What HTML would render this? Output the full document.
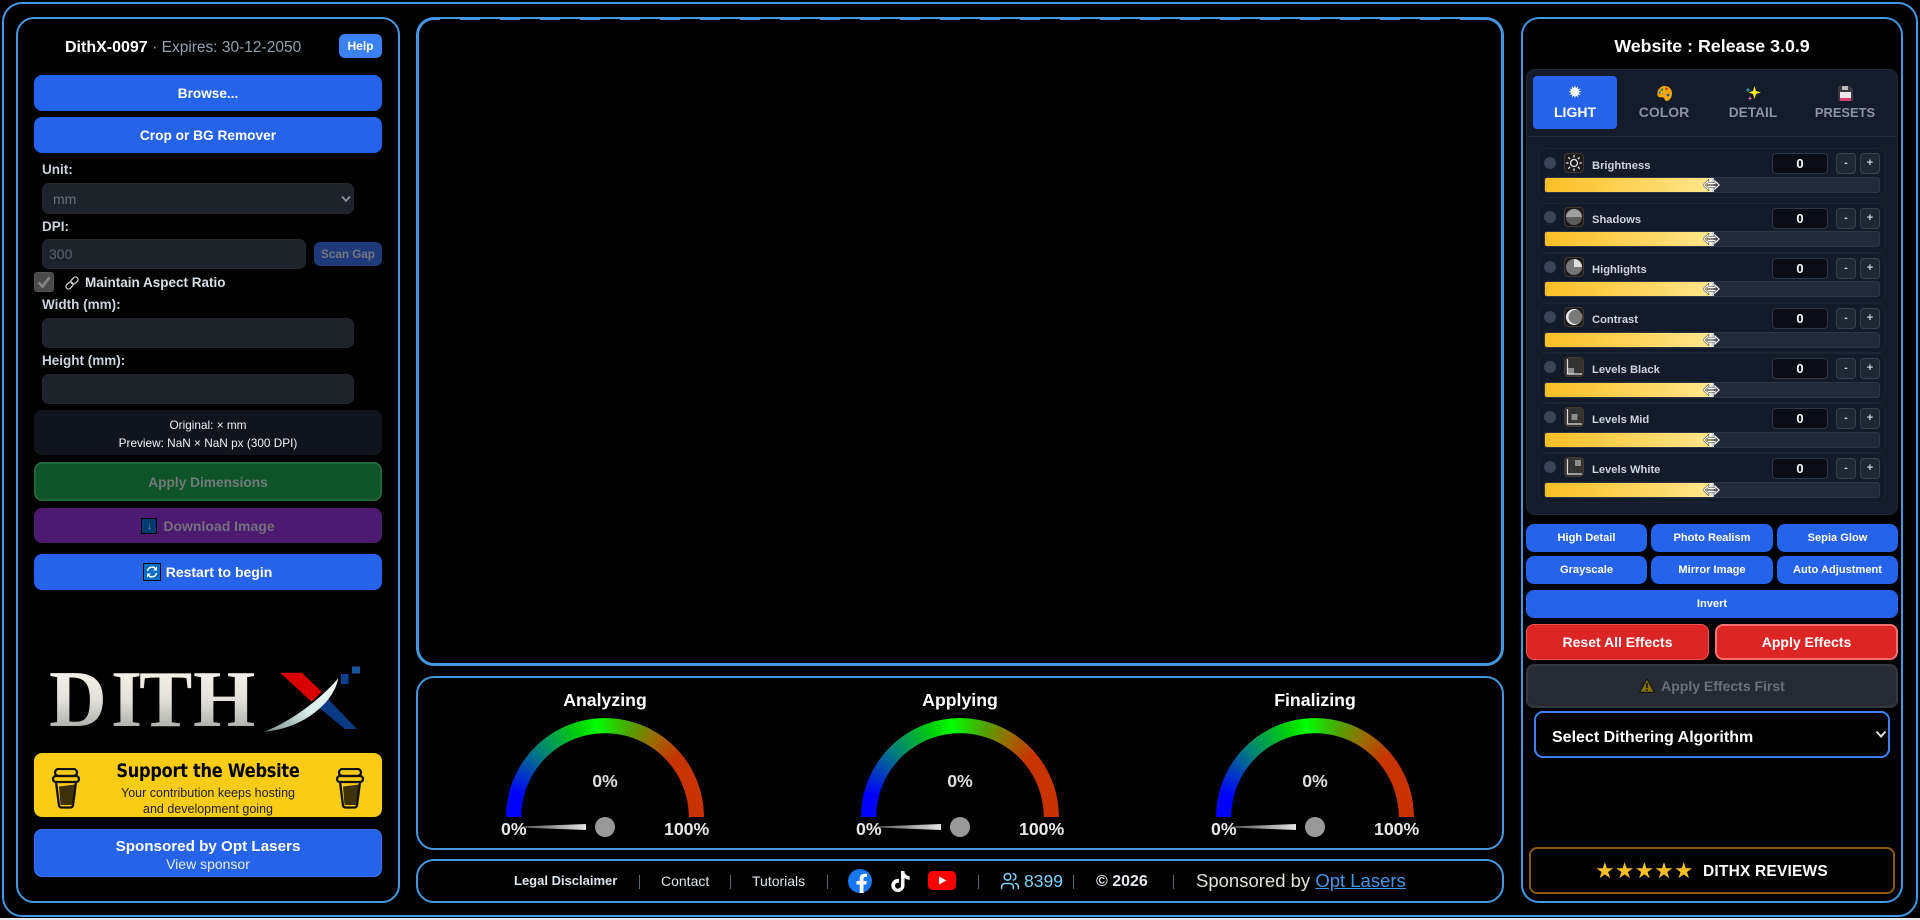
<!DOCTYPE html>
<html lang="en"><head><meta charset="utf-8"><title>DithX</title>
<style>
*{box-sizing:border-box;margin:0;padding:0}
html,body{width:1920px;height:920px;overflow:hidden;background:#000;font-family:"Liberation Sans",Arial,sans-serif;color:#fff}
.a{position:absolute}
.panel{position:absolute;border:2px solid #4299e1;border-radius:18px;background:#000}
button,.btn{position:absolute;display:flex;align-items:center;justify-content:center;border:0;border-radius:8px;background:#2563eb;color:#fff;font:bold 14px "Liberation Sans",Arial,sans-serif;white-space:nowrap}
.t{position:absolute;white-space:nowrap}
.c{transform:translateX(-50%)}
.lbl{position:absolute;left:42px;font-size:13.5px;font-weight:bold;color:#cbd2dc;white-space:nowrap;line-height:16px}
.inp{position:absolute;left:42px;width:312px;background:#1e2229;border:1px solid #23272e;border-radius:7px;color:#6b7078;font:14px "Liberation Sans",Arial,sans-serif}
.row{position:absolute;left:1539px;width:346px;height:50px;border:1px solid #1c2433;border-radius:7px;background:#131a29}
.dot{position:absolute;left:4px;top:8px;width:12px;height:12px;border-radius:50%;background:#3c4356}
.ic{position:absolute;left:24px;top:4px;width:20px;height:20px;border:1px solid #43382a;border-radius:4px;background:#1c1c1e;overflow:hidden}
.ic svg{display:block}
.nm{position:absolute;left:52px;top:9px;font-size:11.2px;font-weight:bold;color:#cdd5e0;line-height:16px;white-space:nowrap}
.val{position:absolute;left:232px;top:4px;width:56px;height:21px;background:#090c15;border:1px solid #2e3746;border-radius:4px;text-align:center;font:bold 13px/19px "Liberation Sans",Arial,sans-serif;color:#fff}
.pm{position:absolute;top:4px;width:20px;height:21px;background:#1f2735;border:1px solid #374151;border-radius:4px;font:bold 11px/19px "Liberation Sans",Arial,sans-serif;color:#c9d0da;text-align:center}
.sl{position:absolute;left:4px;top:28px;width:336px;height:16px;background:#222a39;border:1px solid #2d3646;border-radius:3px;overflow:hidden}
.sl i{position:absolute;left:0;top:0;height:100%;width:165px;background:linear-gradient(90deg,#fbbf24,#fde68a)}
.sl b{position:absolute;left:165px;top:0;width:4px;height:100%;background:linear-gradient(90deg,#fff,#b9bec8)}
.cur{position:absolute;left:163px;top:30px}
.r2 .dot{top:7px}.r2 .ic{top:3px}.r2 .nm{top:8px}.r2 .sl{top:27.5px}.r2 .cur{top:29.5px}
.tab{position:absolute;top:105px;font-size:14px;font-weight:bold;color:#8a93a3;transform:translateX(-50%);line-height:16px;white-space:nowrap}
.gl{position:absolute;width:198px;height:99px;top:718px;overflow:hidden}
.gl div{width:198px;height:198px;border-radius:50%;background:conic-gradient(from 270deg,#0000ff 0deg,#0000ff 14deg,#00807a 45deg,#00d800 75deg,#00ff00 85deg,#4fa400 105deg,#9a6a00 122deg,#c83400 140deg,#c83200 180deg,#0000ff 180deg);-webkit-mask:radial-gradient(circle,transparent 83.5px,#000 84px);mask:radial-gradient(circle,transparent 83.5px,#000 84px)}
.gt{position:absolute;font-size:17.7px;font-weight:bold;white-space:nowrap;line-height:20px}
.needle{position:absolute;top:824px;width:63px;height:6px;background:linear-gradient(90deg,#555,#e4e4e4);clip-path:polygon(0 40%,100% 0,100% 100%,0 60%)}
.hub{position:absolute;top:817px;width:20px;height:20px;border-radius:50%;background:#999}
.div{position:absolute;top:875px;width:1px;height:14px;background:#5d6673}
.ft{position:absolute;top:873px;font-size:14px;line-height:16px;color:#dfe5ec;white-space:nowrap}
</style></head><body>
<div class="panel" style="left:2px;top:2px;width:1916px;height:915px;border-radius:20px"></div>
<div class="a" style="left:0;top:918px;width:1920px;height:2px;background:#e8e8e8"></div>

<!-- LEFT -->
<div class="panel" style="left:16px;top:17px;width:384px;height:886px"></div>
<div class="t" style="left:65px;top:39px;font-size:16px;line-height:18px;font-weight:bold">DithX-0097 <span style="font-weight:normal;font-size:15.5px;color:#93a0b0">· Expires: 30-12-2050</span></div>
<button style="left:339px;top:34px;width:43px;height:24px;background:#3b82f6;border-radius:6px;font-size:12px">Help</button>
<button style="left:34px;top:74.5px;width:348px;height:36px;font-size:13.6px;padding-top:1px">Browse...</button>
<button style="left:34px;top:116.5px;width:348px;height:36px;font-size:13.7px;padding-top:1px">Crop or BG Remover</button>
<div class="lbl" style="top:162px">Unit:</div>
<div class="inp" style="top:182.5px;height:31px;padding:7px 10px;line-height:16px">mm
<svg class="a" style="left:298px;top:11px" width="10" height="8" viewBox="0 0 10 8"><path d="M1 1.5 5 6 9 1.5" fill="none" stroke="#8b9098" stroke-width="1.8"/></svg></div>
<div class="lbl" style="top:219px">DPI:</div>
<div class="inp" style="top:239px;width:264px;height:30px;padding:6px;line-height:16px;color:#5f646c">300</div>
<button style="left:314px;top:242px;width:68px;height:24px;background:#1e3a7a;border-radius:6px;font-size:11.7px;color:#73777f">Scan Gap</button>
<div class="a" style="left:34px;top:272px;width:20px;height:20px;background:#4a4a4a;border:1px solid #555;border-radius:3px"><svg width="18" height="18" viewBox="0 0 18 18"><path d="M3.5 9.5 7.5 13.5 14.5 4.5" fill="none" stroke="#868686" stroke-width="2.6"/></svg></div>
<svg class="a" style="left:64px;top:275px" width="16" height="16" viewBox="0 0 16 16" fill="none" stroke="#d6d8dc" stroke-width="1.2"><rect x="1.5" y="8" width="8" height="5" rx="2.5" transform="rotate(-45 5.500 10.500)"/><rect x="6.500" y="3" width="8" height="5" rx="2.500" transform="rotate(-45 10.500 5.500)"/></svg>
<div class="lbl" style="left:85px;top:274.5px;color:#d9dfe8;font-size:13.5px">Maintain Aspect Ratio</div>
<div class="lbl" style="top:297px">Width (mm):</div>
<div class="inp" style="top:317.5px;height:30px"></div>
<div class="lbl" style="top:353px">Height (mm):</div>
<div class="inp" style="top:373.5px;height:30px"></div>
<div class="a" style="left:34px;top:410px;width:348px;height:45px;background:#10151d;border-radius:8px;text-align:center;font-size:11.8px;line-height:18px;padding-top:6px;color:#eef2f7">Original: × mm<br>Preview: NaN × NaN px (300 DPI)</div>
<button style="left:34px;top:462px;width:348px;height:39px;background:#0f5428;border:2px solid #1d6a3a;color:#72797a;font-size:13.7px;padding-top:1px">Apply Dimensions</button>
<button style="left:34px;top:508px;width:348px;height:35px;background:#4c1a70;color:#75717c"><span style="display:inline-block;width:16px;height:16px;background:#003c70;border:1px solid #000;margin-right:6px;color:#7f8a96;font-size:11px;line-height:14px;font-weight:normal;text-align:center">↓</span>Download Image</button>
<button style="left:34px;top:553.5px;width:348px;height:36px"><svg width="16" height="16" viewBox="0 0 16 16" style="margin-right:6px;background:#0a6ec4;outline:1px solid #000"><path d="M3.5 7A4.6 4.6 0 0 1 12 5.4M12.5 9A4.6 4.6 0 0 1 4 10.6" fill="none" stroke="#fff" stroke-width="1.5"/><path d="M13 2.5V6.5H9zM3 13.5V9.5H7z" fill="#fff"/></svg>Restart to begin</button>

<svg class="a" style="left:40px;top:660px" width="330" height="80" viewBox="40 660 330 80">
<defs><linearGradient id="lg" x1="0" y1="0" x2="0" y2="1"><stop offset="0" stop-color="#fffaf0"/><stop offset=".5" stop-color="#e2e0da"/><stop offset="1" stop-color="#8f9290"/></linearGradient>
<linearGradient id="sw" x1="0" y1="1" x2="1" y2="0"><stop offset="0" stop-color="#7f8f8e"/><stop offset=".5" stop-color="#d9eeea"/><stop offset="1" stop-color="#f4f6f2"/></linearGradient></defs>
<text x="49 111 139 193" y="726" font-family="Liberation Serif" font-weight="bold" font-size="80" fill="url(#lg)">DITH</text>
<polygon points="280,672.7 301.7,672.7 321.7,691.7 311.7,701.7" fill="#d90000"/>
<polygon points="318.3,707 328,699 357,729 345,729" fill="#0a3a86"/>
<path d="M264.3 731.7C290 722 320 700 338.3 678.3C335 695 322 708 310 716C295 726 280 730 264.3 731.7z" fill="url(#sw)"/>
<rect x="341" y="674" width="7.5" height="10" fill="#0c3f8f"/><rect x="352" y="666.5" width="8" height="7" fill="#14559c"/>
</svg>

<div class="a" style="left:34px;top:753px;width:348px;height:64px;background:#facc15;border-radius:8px"></div>
<div class="t c" style="left:208px;top:760px;font:bold 19px/22px 'DejaVu Sans',sans-serif;letter-spacing:-.3px;color:#000;transform:translateX(-50%) scaleX(.85)">Support the Website</div>
<div class="t c" style="left:208px;top:785px;font-size:12.5px;line-height:16px;color:#222;text-align:center">Your contribution keeps hosting<br>and development going</div>
<svg class="a" style="left:52px;top:768px" width="28" height="41" viewBox="0 0 28 41" fill="none" stroke="#111" stroke-width="2.300"><path d="M7 18.5 23 16.5 20.5 37H8.5z" fill="#3d3208" stroke="none"/><rect x="3" y="1" width="22" height="7" rx="3.5"/><rect x="1" y="8" width="26" height="6" rx="3"/><path d="M4 14 7 37.500Q7.500 39.500 10 39.500H18Q20.500 39.500 21 37.500L24 14"/></svg>
<svg class="a" style="left:336px;top:768px" width="28" height="41" viewBox="0 0 28 41" fill="none" stroke="#111" stroke-width="2.300"><path d="M7 18.5 23 16.5 20.5 37H8.5z" fill="#3d3208" stroke="none"/><rect x="3" y="1" width="22" height="7" rx="3.5"/><rect x="1" y="8" width="26" height="6" rx="3"/><path d="M4 14 7 37.500Q7.500 39.500 10 39.500H18Q20.500 39.500 21 37.500L24 14"/></svg>
<div class="btn" style="left:34px;top:829px;width:348px;height:48px;border:1px solid #3b74ea;flex-direction:column;font-size:15.2px;line-height:19px;padding-top:3px">Sponsored by Opt Lasers<span style="font-weight:normal;font-size:14px;line-height:17px;color:#e6ecfa">View sponsor</span></div>

<!-- CENTER -->
<div class="panel" style="left:416px;top:17px;width:1088px;height:649px;border-width:3px"></div>
<div class="a" style="left:440px;top:19px;width:1040px;height:1px;background:repeating-linear-gradient(90deg,#000 0,#000 20px,#4299e1 20px,#4299e1 40px)"></div>
<div class="panel" style="left:416px;top:676px;width:1088px;height:174px"></div>
<div class="panel" style="left:416px;top:859px;width:1088px;height:44px"></div>

<div class="gt c" style="left:605px;top:690px">Analyzing</div>
<div class="gl" style="left:506px"><div></div></div>
<div class="gt c" style="left:605px;top:771px;color:#ddd">0%</div>
<div class="needle" style="left:523px"></div><div class="hub" style="left:595px"></div>
<div class="gt" style="left:501px;top:819px;color:#e8e8e8">0%</div>
<div class="gt" style="left:664px;top:819px;color:#e8e8e8">100%</div>

<div class="gt c" style="left:960px;top:690px">Applying</div>
<div class="gl" style="left:861px"><div></div></div>
<div class="gt c" style="left:960px;top:771px;color:#ddd">0%</div>
<div class="needle" style="left:878px"></div><div class="hub" style="left:950px"></div>
<div class="gt" style="left:856px;top:819px;color:#e8e8e8">0%</div>
<div class="gt" style="left:1019px;top:819px;color:#e8e8e8">100%</div>

<div class="gt c" style="left:1315px;top:690px">Finalizing</div>
<div class="gl" style="left:1216px"><div></div></div>
<div class="gt c" style="left:1315px;top:771px;color:#ddd">0%</div>
<div class="needle" style="left:1233px"></div><div class="hub" style="left:1305px"></div>
<div class="gt" style="left:1211px;top:819px;color:#e8e8e8">0%</div>
<div class="gt" style="left:1374px;top:819px;color:#e8e8e8">100%</div>

<div class="ft" style="left:514px;font-weight:bold;font-size:13px">Legal Disclaimer</div><div class="div" style="left:639px"></div>
<div class="ft" style="left:661px">Contact</div><div class="div" style="left:730px"></div>
<div class="ft" style="left:752px">Tutorials</div><div class="div" style="left:827px"></div>
<svg class="a" style="left:848px;top:869px" width="24" height="24" viewBox="0 0 24 24"><circle cx="12" cy="12" r="12" fill="#1877f2"/><path d="M15.500 24V15.500H18.300L18.800 12H15.500V9.800C15.500 8.800 16 7.900 17.500 7.900H19V5C18.100 4.900 17.200 4.800 16.300 4.800C13.500 4.800 11.700 6.500 11.700 9.500V12H8.500V15.500H11.700V24z" fill="#fff"/></svg>
<svg class="a" style="left:890px;top:870px" width="21" height="23" viewBox="0 0 24 24"><path fill="#fff" d="M12.525.02c1.310-.020 2.610-.010 3.910-.020.080 1.530.630 3.090 1.750 4.170 1.120 1.110 2.700 1.620 4.240 1.790v4.030c-1.440-.050-2.890-.350-4.200-.970-.570-.260-1.100-.590-1.620-.930-.010 2.920.010 5.840-.020 8.750-.080 1.400-.540 2.790-1.350 3.940-1.310 1.920-3.580 3.170-5.910 3.210-1.430.080-2.860-.310-4.080-1.030-2.020-1.190-3.440-3.370-3.650-5.710-.020-.500-.030-1-.010-1.490.180-1.900 1.120-3.720 2.580-4.960 1.660-1.440 3.980-2.130 6.150-1.720.020 1.480-.040 2.960-.040 4.440-.990-.320-2.150-.230-3.020.370-.630.410-1.110 1.040-1.360 1.750-.210.510-.150 1.070-.140 1.610.240 1.640 1.820 3.020 3.500 2.870 1.120-.010 2.190-.660 2.770-1.610.190-.330.400-.670.410-1.060.100-1.790.060-3.570.070-5.360.010-4.030-.010-8.050.020-12.070z"/></svg>
<svg class="a" style="left:928px;top:871px" width="28" height="19" viewBox="0 0 28 19"><rect width="28" height="19" rx="4.500" fill="#f00"/><path d="M11 5.500 18.500 9.500 11 13.500z" fill="#fff"/></svg>
<div class="div" style="left:978px"></div>
<svg class="a" style="left:1000px;top:871px" width="20" height="20" viewBox="0 0 24 24" fill="none" stroke="#7dd3fc" stroke-width="1.800" stroke-linecap="round"><path d="M16 21v-2a4 4 0 0 0-4-4H6a4 4 0 0 0-4 4v2"/><circle cx="9" cy="7" r="4"/><path d="M22 21v-2a4 4 0 0 0-3-3.870"/><path d="M16 3.130a4 4 0 0 1 0 7.750"/></svg>
<div class="ft" style="left:1024px;top:872px;font-size:17.500px;line-height:18px;color:#7dd3fc">8399</div><div class="div" style="left:1073px"></div>
<div class="ft" style="left:1096px;top:873px;font-size:16px;line-height:18px;font-weight:bold;color:#e2e6ea">© 2026</div><div class="div" style="left:1173px"></div>
<div class="ft" style="left:1196px;top:871px;font-size:18.500px;line-height:20px;color:#e2e2da">Sponsored by <span style="color:#3f97ea;text-decoration:underline">Opt Lasers</span></div>

<!-- RIGHT -->
<div class="panel" style="left:1521px;top:17px;width:382px;height:886px"></div>
<div class="t c" style="left:1712px;top:36px;font-size:17.8px;line-height:20px;font-weight:bold">Website : Release 3.0.9</div>
<div class="a" style="left:1526px;top:69px;width:372px;height:446px;background:#141b2a;border:1px solid #1f2735;border-radius:9px"></div>
<div class="a" style="left:1527px;top:136px;width:370px;height:1px;background:#222b3b"></div>
<div class="a" style="left:1533px;top:76px;width:84px;height:53px;background:#2563eb;border-radius:4px"></div>
<div class="t c" style="left:1575px;top:83px;font:17px/20px 'DejaVu Sans',sans-serif">✹</div>
<div class="tab" style="left:1575px;top:104px;color:#fff">LIGHT</div>
<svg class="a" style="left:1657px;top:86px" width="15" height="15" viewBox="0 0 15 15"><path d="M7.500 0C12 0 15 3 15 7.500S12 15 9.500 15C7.500 15 8 12 6 11.500C4 11 2 12 .800 10C-1 6 2.500 0 7.500 0z" fill="#f7a800"/><circle cx="5" cy="3.500" r="1.300" fill="#2f8f3a"/><circle cx="9.500" cy="2.800" r="1.300" fill="#d3302a"/><circle cx="2.800" cy="6.500" r="1.200" fill="#1a6bd8"/><circle cx="11" cy="9" r="1.400" fill="#2a55b8"/></svg>
<div class="tab" style="left:1664px;top:104px">COLOR</div>
<svg class="a" style="left:1745px;top:86px" width="16" height="16" viewBox="0 0 16 16"><path d="M9.500 0 11 5 16 6.500 11 8 9.500 13 8 8 3.500 6.500 8 5z" fill="#ffe81a"/><path d="M3 1.500 3.800 3.200 5.500 4 3.800 4.800 3 6.500 2.200 4.800 .5 4 2.200 3.200z" fill="#2aa8a0"/><path d="M5 10 5.600 11.800 7.400 12.400 5.600 13 5 15 4.400 13 2.600 12.400 4.400 11.800z" fill="#e070a8"/></svg>
<div class="tab" style="left:1753px;font-size:13.700px">DETAIL</div>
<svg class="a" style="left:1838px;top:86px" width="15" height="15" viewBox="0 0 15 15"><path d="M1 0H12L15 3V14Q15 15 14 15H1Q0 15 0 14V1Q0 0 1 0z" fill="#3a3a3e"/><rect x="2" y="6" width="11" height="9" fill="#ece6ea"/><rect x="2" y="12" width="11" height="3" fill="#d83a72"/><rect x="4" y="0" width="6" height="4" fill="#b9b9be"/></svg>
<div class="tab" style="left:1845px;font-size:12.900px">PRESETS</div>

<div class="row" style="top:148px"><div class="dot"></div><div class="ic"><svg width="18" height="18" viewBox="0 0 18 18"><circle cx="9" cy="9" r="3.500" fill="none" stroke="#e6e6e6" stroke-width="1.300"/><path d="M9 1V3.500M9 14.500V17M1 9H3.500M14.500 9H17M3.300 3.300 5 5M13 13 14.700 14.700M3.300 14.700 5 13M13 5 14.700 3.300" stroke="#e6e6e6" stroke-width="1.300"/></svg></div><div class="nm">Brightness</div><div class="val">0</div><div class="pm" style="left:296px">-</div><div class="pm" style="left:320px">+</div><div class="sl"><i></i><b></b></div><svg class="cur" width="17" height="12" viewBox="0 0 17 12"><path d="M.8 6 5 2V4.500H12V2L16.200 6 12 10V7.500H5V10z" fill="none" stroke="#444" stroke-width="2"/><path d="M.8 6 5 2V4.500H12V2L16.200 6 12 10V7.500H5V10z" fill="#777" fill-opacity=".5" stroke="#fff" stroke-width="1"/></svg></div>
<div class="row r2" style="top:202.5px"><div class="dot"></div><div class="ic"><svg width="18" height="18" viewBox="0 0 18 18"><circle cx="9" cy="9" r="8" fill="#5c5c5c"/><path d="M1 9A8 8 0 0 1 17 9z" fill="#a0a0a0"/></svg></div><div class="nm">Shadows</div><div class="val">0</div><div class="pm" style="left:296px">-</div><div class="pm" style="left:320px">+</div><div class="sl"><i></i><b></b></div><svg class="cur" width="17" height="12" viewBox="0 0 17 12"><path d="M.8 6 5 2V4.500H12V2L16.200 6 12 10V7.500H5V10z" fill="none" stroke="#444" stroke-width="2"/><path d="M.8 6 5 2V4.500H12V2L16.200 6 12 10V7.500H5V10z" fill="#777" fill-opacity=".5" stroke="#fff" stroke-width="1"/></svg></div>
<div class="row r2" style="top:252.5px"><div class="dot"></div><div class="ic"><svg width="18" height="18" viewBox="0 0 18 18"><circle cx="9" cy="9" r="8" fill="#777"/><path d="M9 9V1A8 8 0 0 1 17 9z" fill="#dedede"/></svg></div><div class="nm">Highlights</div><div class="val">0</div><div class="pm" style="left:296px">-</div><div class="pm" style="left:320px">+</div><div class="sl"><i></i><b></b></div><svg class="cur" width="17" height="12" viewBox="0 0 17 12"><path d="M.8 6 5 2V4.500H12V2L16.200 6 12 10V7.500H5V10z" fill="none" stroke="#444" stroke-width="2"/><path d="M.8 6 5 2V4.500H12V2L16.200 6 12 10V7.500H5V10z" fill="#777" fill-opacity=".5" stroke="#fff" stroke-width="1"/></svg></div>
<div class="row r2" style="top:303px"><div class="dot"></div><div class="ic"><svg width="18" height="18" viewBox="0 0 18 18"><circle cx="9" cy="9" r="8" fill="#eee"/><circle cx="10.500" cy="9" r="7" fill="#7a7a7a"/></svg></div><div class="nm">Contrast</div><div class="val">0</div><div class="pm" style="left:296px">-</div><div class="pm" style="left:320px">+</div><div class="sl"><i></i><b></b></div><svg class="cur" width="17" height="12" viewBox="0 0 17 12"><path d="M.8 6 5 2V4.500H12V2L16.200 6 12 10V7.500H5V10z" fill="none" stroke="#444" stroke-width="2"/><path d="M.8 6 5 2V4.500H12V2L16.200 6 12 10V7.500H5V10z" fill="#777" fill-opacity=".5" stroke="#fff" stroke-width="1"/></svg></div>
<div class="row r2" style="top:353px"><div class="dot"></div><div class="ic"><svg width="18" height="18" viewBox="0 0 18 18"><rect width="18" height="18" fill="#333"/><rect x="3" y="10" width="6" height="6" fill="#8c8c8c"/><path d="M2.500 1V16H17" fill="none" stroke="#ddd" stroke-width="1.200"/></svg></div><div class="nm">Levels Black</div><div class="val">0</div><div class="pm" style="left:296px">-</div><div class="pm" style="left:320px">+</div><div class="sl"><i></i><b></b></div><svg class="cur" width="17" height="12" viewBox="0 0 17 12"><path d="M.8 6 5 2V4.500H12V2L16.200 6 12 10V7.500H5V10z" fill="none" stroke="#444" stroke-width="2"/><path d="M.8 6 5 2V4.500H12V2L16.200 6 12 10V7.500H5V10z" fill="#777" fill-opacity=".5" stroke="#fff" stroke-width="1"/></svg></div>
<div class="row r2" style="top:403px"><div class="dot"></div><div class="ic"><svg width="18" height="18" viewBox="0 0 18 18"><rect width="18" height="18" fill="#333"/><rect x="6.500" y="6" width="6" height="6" fill="#8c8c8c"/><path d="M2.500 1V16H17" fill="none" stroke="#ddd" stroke-width="1.200"/></svg></div><div class="nm">Levels Mid</div><div class="val">0</div><div class="pm" style="left:296px">-</div><div class="pm" style="left:320px">+</div><div class="sl"><i></i><b></b></div><svg class="cur" width="17" height="12" viewBox="0 0 17 12"><path d="M.8 6 5 2V4.500H12V2L16.200 6 12 10V7.500H5V10z" fill="none" stroke="#444" stroke-width="2"/><path d="M.8 6 5 2V4.500H12V2L16.200 6 12 10V7.500H5V10z" fill="#777" fill-opacity=".5" stroke="#fff" stroke-width="1"/></svg></div>
<div class="row r2" style="top:453px"><div class="dot"></div><div class="ic"><svg width="18" height="18" viewBox="0 0 18 18"><rect width="18" height="18" fill="#333"/><rect x="10" y="2" width="6" height="6" fill="#8c8c8c"/><path d="M2.500 1V16H17" fill="none" stroke="#ddd" stroke-width="1.200"/></svg></div><div class="nm">Levels White</div><div class="val">0</div><div class="pm" style="left:296px">-</div><div class="pm" style="left:320px">+</div><div class="sl"><i></i><b></b></div><svg class="cur" width="17" height="12" viewBox="0 0 17 12"><path d="M.8 6 5 2V4.500H12V2L16.200 6 12 10V7.500H5V10z" fill="none" stroke="#444" stroke-width="2"/><path d="M.8 6 5 2V4.500H12V2L16.200 6 12 10V7.500H5V10z" fill="#777" fill-opacity=".5" stroke="#fff" stroke-width="1"/></svg></div>

<button style="left:1526px;top:523.500px;width:121px;height:28px;font-size:11.100px">High Detail</button>
<button style="left:1651px;top:523.500px;width:122px;height:28px;font-size:11.100px">Photo Realism</button>
<button style="left:1777px;top:523.500px;width:121px;height:28px;font-size:11.100px">Sepia Glow</button>
<button style="left:1526px;top:555.500px;width:121px;height:28px;font-size:11.100px;padding-top:1px">Grayscale</button>
<button style="left:1651px;top:555.500px;width:122px;height:28px;font-size:11.100px;padding-top:1px">Mirror Image</button>
<button style="left:1777px;top:555.500px;width:121px;height:28px;font-size:11.100px;padding-top:1px">Auto Adjustment</button>
<button style="left:1526px;top:589.500px;width:372px;height:28px;font-size:11.100px">Invert</button>
<button style="left:1526px;top:623.500px;width:183px;height:36px;background:#dc2626;border:1px solid #ef5350">Reset All Effects</button>
<button style="left:1715px;top:623.500px;width:183px;height:36px;background:#dc2626;border:2px solid #f87171">Apply Effects</button>
<button style="left:1526px;top:663.500px;width:372px;height:44px;background:#262a32;border:2px solid #33373f;color:#6c7077"><svg width="16" height="15" viewBox="0 0 16 15" style="margin-right:6px"><path d="M8 1 15.300 14.300H.7z" fill="#857200" stroke="#111" stroke-width="1"/><path d="M8 5V10M8 11.300V13" stroke="#111" stroke-width="1.500"/></svg>Apply Effects First</button>
<div class="a" style="left:1534px;top:711px;width:356px;height:47px;border:2px solid #3b82f6;border-radius:9px;background:#000;font:bold 16px/50px 'Liberation Sans',sans-serif;padding-left:16px;color:#fff">Select Dithering Algorithm
<svg class="a" style="left:339px;top:17px" width="12" height="9" viewBox="0 0 12 9"><path d="M1.500 1.500 6 6.500 10.500 1.500" fill="none" stroke="#ddd" stroke-width="2"/></svg></div>
<div class="a" style="left:1529px;top:847px;width:366px;height:47px;border:2px solid #8a5a10;border-radius:8px;background:#000"></div>
<div class="t" style="left:1595px;top:860px;font:22px/24px 'DejaVu Sans',sans-serif;color:#fbbf24;letter-spacing:0">★★★★★</div>
<div class="t" style="left:1703px;top:863px;font-size:15.5px;line-height:18px;font-weight:bold;letter-spacing:.2px">DITHX REVIEWS</div>
</body></html>
